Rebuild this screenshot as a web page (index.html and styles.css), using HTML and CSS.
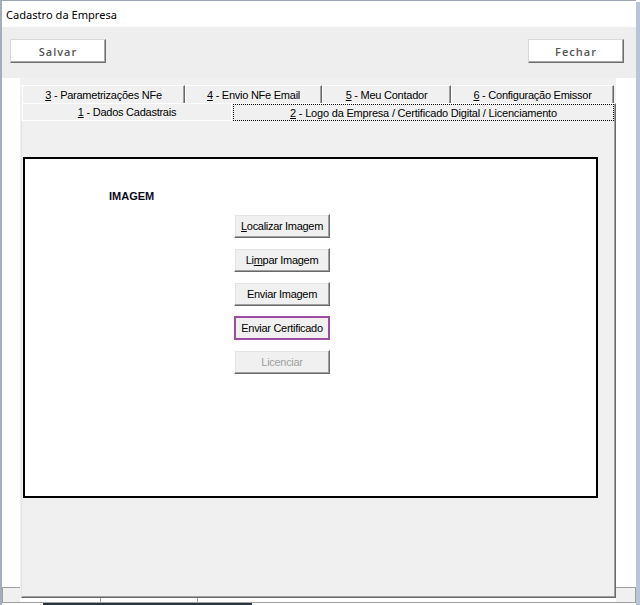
FILE: index.html
```html
<!DOCTYPE html>
<html lang="pt">
<head>
<meta charset="utf-8">
<title>Cadastro da Empresa</title>
<link rel="stylesheet" href="styles.css">
</head>
<body>
<div class="frame">
  <div class="titlebar">Cadastro da Empresa</div>
  <div class="toolbar">
    <div class="tbtn">Salvar</div>
    <div class="tbtn">Fechar</div>
  </div>
  <div class="main">
    <div class="gutter"><div class="sbbox"></div></div>
    <div class="tabctl">
      <div class="tabrow">
        <div class="tab t3"><span><u>3</u> - Parametrizações NFe</span></div>
        <div class="tab t4"><span><u>4</u> - Envio NFe Email</span></div>
        <div class="tab t5"><span><u>5</u> - Meu Contador</span></div>
        <div class="tab t6"><span><u>6</u> - Configuração Emissor</span></div>
      </div>
      <div class="tabrow">
        <div class="tab t1"><span><u>1</u> - Dados Cadastrais</span></div>
        <div class="tab t2 sel"><div class="focusrect"><span><u>2</u> - Logo da Empresa / Certificado Digital / Licenciamento</span></div></div>
      </div>
      <div class="panel">
        <div class="box">
          <div class="label">IMAGEM</div>
          <div class="btns">
            <div class="btn"><span><u>L</u>ocalizar Imagem</span></div>
            <div class="btn"><span>Li<u>m</u>par Imagem</span></div>
            <div class="btn"><span>Enviar Imagem</span></div>
            <div class="btn focused"><span>Enviar Certificado</span></div>
            <div class="btn disabled"><span>Licenciar</span></div>
          </div>
        </div>
      </div>
    </div>
    <div class="gutter right"><div class="sbbox"></div></div>
  </div>
  <div class="statusrow">
    <div class="sb-l"></div>
    <div class="sb-mid">
      <div class="seg s1"></div>
      <div class="seg s2"></div>
    </div>
    <div class="sb-r"></div>
  </div>
  <div class="sline"></div>
  <div class="taskbar"><div class="dark"></div></div>
</div>
<div class="rstrip"></div>
</body>
</html>
```
FILE: styles.css
```css
* { box-sizing: border-box; margin: 0; padding: 0; }
html, body { width: 640px; height: 605px; overflow: hidden; background: #fff; }
body {
  display: flex;
  font-family: "Liberation Sans", Arial, sans-serif;
  font-size: 11px;
  color: #000;
}
u { text-decoration: underline; text-underline-offset: 1px; }

.frame {
  width: 636px;
  height: 605px;
  display: flex;
  flex-direction: column;
  border-top: 1px solid #9ba6b4;
  border-left: 2px solid #a3aebb;
  background: #fff;
}
.rstrip { width: 4px; margin-top: 2px; background: #b8c5d6; }

.titlebar {
  height: 26px;
  padding-left: 4px;
  font-family: "Noto Sans", sans-serif;
  font-size: 11.1px;
  line-height: 27px;
  color: #000;
}

.toolbar {
  height: 51px;
  background: #eeeeee;
  display: flex;
  justify-content: space-between;
  align-items: flex-start;
  padding: 12px 12px 0 8px;
}
.tbtn {
  width: 96px;
  height: 24px;
  background: #fff;
  border: 1px solid;
  border-color: #d8d8d8 #6f6f6f #6f6f6f #d8d8d8;
  box-shadow: inset -1px -1px 0 #a8a8a8;
  font-family: "Open Sans", sans-serif;
  font-weight: 600;
  font-size: 11px;
  letter-spacing: 1px;
  color: #555;
  display: flex;
  align-items: center;
  justify-content: center;
}

.main { height: 520px; display: flex; }
.gutter { width: 18px; display: flex; flex-direction: column; justify-content: flex-end; }
.gutter.right { width: 20px; }
.sbbox { height: 11px; background: #f0f0f0; border-top: 1px solid #a0a0a0; border-left: 1px solid #a0a0a0; }
.gutter.right .sbbox { border-left: none; border-right: 1px solid #a0a0a0; }

.tabctl {
  width: 596px;
  padding-top: 7px;
  background: #f0f0f0;
  display: flex;
  flex-direction: column;
}
.tabrow { display: flex; height: 18px; margin-left: 2px; }
.tab {
  height: 18px;
  border-top: 1px solid #fff;
  border-left: 1px solid #fff;
  border-right: 1px solid #696969;
  box-shadow: inset -1px 0 0 #a0a0a0;
  display: flex;
  align-items: center;
  justify-content: center;
  white-space: nowrap;
  line-height: 14px;
  letter-spacing: -0.25px;
}
.t3 { width: 163px; }
.t4 { width: 137px; }
.t5 { width: 129px; }
.t6 { width: 163px; }
.t1 {
  width: 209px;
  border-right: none;
  box-shadow: none;
  border-bottom: 1px solid #fff;
}
.t2 {
  width: 385px;
  align-items: stretch;
}
.focusrect {
  flex: 1;
  margin: 0 1px 0 1px;
  border: 1px dotted #000;
  display: flex;
  align-items: center;
  justify-content: center;
  letter-spacing: -0.2px;
}

.panel {
  flex: 1;
  margin-left: 1px;
  border-left: 1px solid #e3e3e3;
  border-right: 1px solid #696969;
  border-bottom: 1px solid #696969;
  box-shadow: inset -1px -1px 0 #a0a0a0;
  padding: 36px 0 0 1px;
}
.box {
  width: 575px;
  height: 341px;
  background: #fff;
  border: 2px solid #000;
  padding: 31px 0 0 84px;
}
.label { font-weight: bold; font-size: 11px; line-height: 13px; color: #0a0a1e; }
.btns {
  margin: 11px 0 0 125px;
  width: 96px;
  display: flex;
  flex-direction: column;
  gap: 10px;
}
.btn {
  width: 96px;
  height: 24px;
  background: #f0f0f0;
  border: 1px solid;
  border-color: #fff #696969 #696969 #fff;
  box-shadow: inset -1px -1px 0 #a0a0a0, inset 1px 1px 0 #e3e3e3;
  display: flex;
  align-items: center;
  justify-content: center;
  white-space: nowrap;
  letter-spacing: -0.3px;
}
.btn.focused { border: 2px solid #9d4aa2; box-shadow: none; }
.btn.disabled { color: #a0a0a0; }

.statusrow { height: 4px; display: flex; }
.sb-l { width: 18px; background: #f0f0f0; border-left: 1px solid #a0a0a0; }
.sb-mid { width: 596px; display: flex; }
.seg { border-right: 1px solid #a0a0a0; }
.s1 { width: 81px; }
.s2 { width: 97px; }
.sb-r { width: 20px; background: #f0f0f0; border-right: 1px solid #a0a0a0; }
.sline { height: 1px; background: #a0a0a0; }
.taskbar { height: 2px; display: flex; }
.dark { width: 209px; margin-left: 41px; background: #27343e; }
```
